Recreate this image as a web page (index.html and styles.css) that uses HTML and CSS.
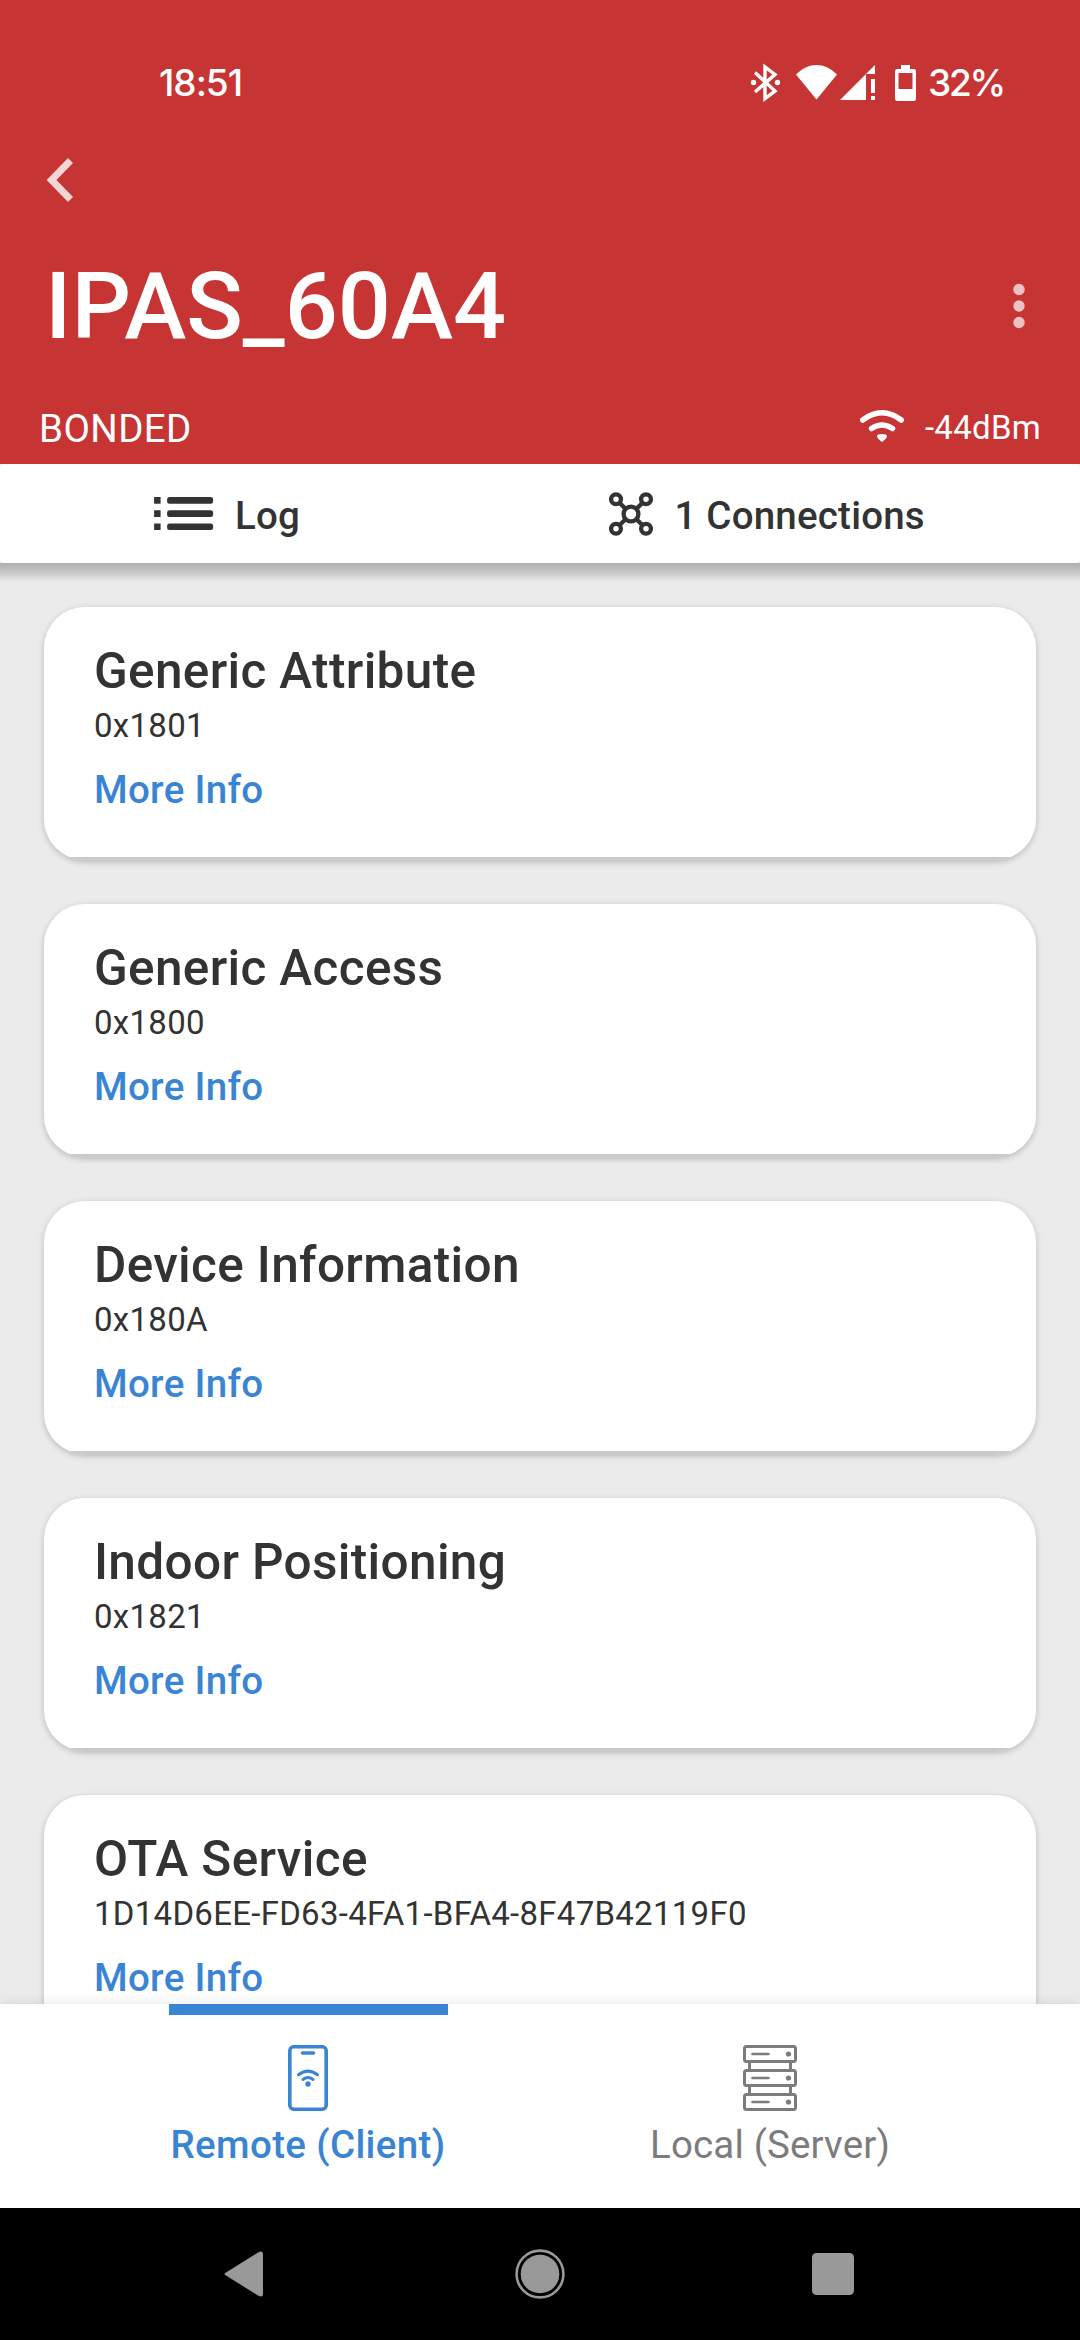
FILE: index.html
```html
<!DOCTYPE html>
<html lang="en">
<head>
<meta charset="utf-8">
<title>IPAS_60A4</title>
<link rel="stylesheet" href="styles.css">
</head>
<body>
<div class="screen">
  <header class="header">
    <div class="status">
      <span class="clock">18:51</span>
      <svg class="status-icons" width="170" height="40" viewBox="748 62 170 40" fill="#fff">
        <path d="M755 72.500l20 18.500L765 98.500V67l10 7.500L755 92" fill="none" stroke="#fff" stroke-width="3.400"/>
        <circle cx="753.500" cy="82.500" r="2.700"/><circle cx="777.500" cy="82.500" r="2.700"/>
        <path d="M796 74.500Q805 65 816.500 65T837 74.500L816.500 99.500z"/>
        <path d="M840 100l35-35v9h-9v26z"/>
        <path d="M871 79h4v14h-4zM871 96h4v4h-4z"/>
        <path fill-rule="evenodd" d="M901 65h9v4h3.500q2.500 0 2.500 2.500v27q0 2.500-2.500 2.500h-16q-2.500 0-2.500-2.500v-27q0-2.500 2.500-2.500h3.500zM898.500 73v16h14V73z"/>
      </svg>
      <span class="battery">32%</span>
    </div>
    <div class="back-row">
      <svg width="28" height="46" viewBox="46 157 28 46"><path d="M70.500 160.500L51.500 180l19 19.500" fill="none" stroke="#fff" stroke-opacity=".8" stroke-width="7"/></svg>
    </div>
    <div class="title-row">
      <h1 class="title">IPAS_60A4</h1>
      <svg width="12" height="46" viewBox="0 0 12 46" fill="#fff" fill-opacity=".7"><circle cx="6" cy="6.500" r="5.700"/><circle cx="6" cy="23" r="5.700"/><circle cx="6" cy="39.500" r="5.700"/></svg>
    </div>
    <div class="info-row">
      <span class="bond">BONDED</span>
      <svg class="rssi-icon" width="46" height="34" viewBox="858 409 46 34" fill="none" stroke="#fff" stroke-width="5.500" stroke-linecap="round">
        <path d="M861.800 420Q871 412.800 881 412.800T900.200 420M870.500 428.500Q881 421.500 891.500 428.500"/>
        <path d="M876 436q0-2 5-2t5 2q0 2.500-5 6q-5-3.500-5-6z" fill="#fff" stroke="none"/>
      </svg>
      <span class="rssi">-44dBm</span>
    </div>
  </header>

  <nav class="actions">
    <div class="action log">
      <svg width="60" height="34" viewBox="153.900 497 60 34" fill="#333"><path d="M154 497h6.500v6.700H154zM154 510.200h6.500v6.700H154zM154 523.400h6.500v6.700H154z"/><rect x="167" y="497" width="46" height="6.700" rx="2.500"/><rect x="167" y="510.200" width="46" height="6.700" rx="2.500"/><rect x="167" y="523.400" width="46" height="6.700" rx="2.500"/></svg>
      <span>Log</span>
    </div>
    <div class="action connections">
      <svg width="44" height="44" viewBox="0 0 44 44" fill="none" stroke="#333" stroke-width="4.300"><circle cx="22" cy="22" r="7.400"/><circle cx="7" cy="7.300" r="4.900"/><circle cx="37" cy="7.300" r="4.900"/><circle cx="7" cy="36.700" r="4.900"/><circle cx="37" cy="36.700" r="4.900"/><path d="M10.500 10.800l6 6M33.500 10.800l-6 6M10.500 33.200l6-6M33.500 33.200l-6-6"/></svg>
      <span>1 Connections</span>
    </div>
  </nav>

  <main class="services">
    <section class="card"><h2 class="name">Generic Attribute</h2><p class="uuid">0x1801</p><a class="more">More Info</a></section>
    <section class="card"><h2 class="name">Generic Access</h2><p class="uuid">0x1800</p><a class="more">More Info</a></section>
    <section class="card"><h2 class="name">Device Information</h2><p class="uuid">0x180A</p><a class="more">More Info</a></section>
    <section class="card"><h2 class="name">Indoor Positioning</h2><p class="uuid">0x1821</p><a class="more">More Info</a></section>
    <section class="card"><h2 class="name">OTA Service</h2><p class="uuid">1D14D6EE-FD63-4FA1-BFA4-8F47B42119F0</p><a class="more">More Info</a></section>
  </main>

  <nav class="tabs">
    <div class="tab active">
      <svg width="40" height="66" viewBox="0 0 40 66" fill="none" stroke="#3a84d4" stroke-width="3.600" stroke-linecap="round"><rect x="1.800" y="1.800" width="36.400" height="62.400" rx="4"/><path d="M14.500 8h11"/><path d="M10.500 29.800Q20 22.500 29.500 29.800M15 34.500Q20 30.500 25 34.500" stroke-width="3"/><circle cx="20" cy="39" r="2.700" fill="#3a84d4" stroke="none"/></svg>
      <span>Remote (Client)</span>
    </div>
    <div class="tab">
      <svg width="54" height="66" viewBox="0 0 54 66" fill="none" stroke="#7c7c7c" stroke-width="3"><rect x="1.500" y="1.500" width="51" height="15" rx="2"/><rect x="1.500" y="25.500" width="51" height="15" rx="2"/><rect x="1.500" y="49.500" width="51" height="15" rx="2"/><path d="M6.500 17v8M47.500 17v8M6.500 41v8M47.500 41v8"/><path d="M9.500 9h16M9.500 33h16M9.500 57h16" stroke-linecap="round" stroke-width="2.600"/><g fill="#7c7c7c" stroke="none"><circle cx="45.500" cy="9" r="2.600"/><circle cx="45.500" cy="33" r="2.600"/><circle cx="45.500" cy="57" r="2.600"/></g></svg>
      <span>Local (Server)</span>
    </div>
  </nav>

  <footer class="system">
    <svg width="40" height="48" viewBox="0 0 40 48" fill="#999"><path d="M2 22.500L34 2.500Q39 0 39 4.500v39Q39 48 34 45.500L2 25.500Q-1 24 2 22.500z"/></svg>
    <svg class="home" width="50" height="50" viewBox="0 0 50 50"><circle cx="25" cy="25" r="23.400" fill="none" stroke="#999" stroke-width="2.600"/><circle cx="25" cy="25" r="19.300" fill="#999"/></svg>
    <svg width="42" height="42" viewBox="0 0 42 42"><rect width="42" height="42" rx="4.500" fill="#999"/></svg>
  </footer>
</div>
</body>
</html>
```
FILE: styles.css
```css
* { box-sizing: border-box; margin: 0; }
body { font-family: Roboto, sans-serif; color: #333; background: #ebebeb; }
svg { display: block; flex: none; }
.screen { width: 1080px; height: 2340px; display: flex; flex-direction: column; overflow: hidden; }

.header { height: 464px; flex: none; background: #c73434; color: #fff; }
.status { height: 132px; display: flex; align-items: flex-start; padding: 62px 0 0 159px; font: 500 37px/42px Inter, sans-serif; }
.clock { width: 589px; letter-spacing: -1px; }
.battery { margin-left: 10px; letter-spacing: -2.2px; }
.back-row { height: 96px; display: flex; align-items: center; padding-left: 46px; }
.title-row { height: 156px; display: flex; align-items: center; justify-content: space-between; padding: 0 55px 0 45px; }
.title { font-size: 93.5px; line-height: 100px; font-weight: 500; }
.info-row { display: flex; align-items: flex-start; padding: 23px 39px 0; }
.bond { font-size: 38.5px; line-height: 44px; margin-right: auto; letter-spacing: .4px; }
.rssi-icon { margin: 2px 20px 0 0; }
.rssi { font-size: 33px; line-height: 42px; letter-spacing: .3px; }

.actions { position: relative; height: 99px; flex: none; display: grid; grid-template-columns: 1fr 1fr; background: #fff; border-radius: 4px; }
.actions::after { content: ""; position: absolute; top: 100%; left: 0; right: 0; height: 19px; background: linear-gradient(rgba(0, 0, 0, .26), rgba(0, 0, 0, .16) 45%, rgba(0, 0, 0, 0)); }
.action { display: flex; align-items: center; font-size: 38.5px; line-height: 44px; font-weight: 500; letter-spacing: .2px; }
.action span { margin-top: 5px; }
.log { padding-left: 154px; gap: 21px; }
.connections { padding-left: 69px; gap: 21.5px; }

.services { flex: 1; min-height: 0; overflow: hidden; display: flex; flex-direction: column; gap: 44px; padding: 44px 44px 0; }
.card { height: 253px; flex: none; padding: 35px 50px 0; border-radius: 41px; background: linear-gradient(#fff 250px, #cacaca 250px); box-shadow: 0 2px 6px rgba(0, 0, 0, .22); }
.name { font-size: 49.5px; line-height: 58px; font-weight: 500; letter-spacing: .35px; }
.uuid { margin-top: 7px; font-size: 33px; line-height: 38px; letter-spacing: .28px; }
.more { display: block; margin-top: 23px; font-size: 38.5px; line-height: 44px; font-weight: 500; letter-spacing: .3px; color: #3a84d4; }

.tabs { height: 204px; flex: none; display: flex; padding: 0 79px 0 77px; background: #fff; box-shadow: 0 0 12px rgba(0, 0, 0, .1); }
.tab { position: relative; flex: 1; display: flex; flex-direction: column; align-items: center; gap: 12px; padding-top: 41px; font-size: 38.5px; line-height: 44px; color: #7c7c7c; letter-spacing: .15px; }
.active { color: #3a84d4; font-weight: 500; letter-spacing: .35px; }
.active::before { content: ""; position: absolute; top: 0; left: 92px; width: 279px; height: 11px; background: #3a84d4; }

.system { height: 132px; flex: none; display: flex; align-items: center; justify-content: space-between; padding: 0 226px 0 224px; background: #000; }
.home { margin-left: 4px; }
```
